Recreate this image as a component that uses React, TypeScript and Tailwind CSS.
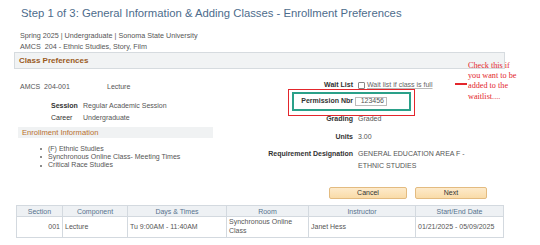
import React from "react";

const sans = { fontFamily: '"Liberation Sans", Arial, sans-serif' };

export default function App() {
  return (
    <div
      className="relative w-[540px] h-[245px] overflow-hidden bg-white text-[#444]"
      style={sans}
    >
      {/* Title */}
      <div className="pl-[21px] pt-[6px] text-[11.3px] leading-[14px] text-[#4d6c8c]">
        Step 1 of 3: General Information &amp; Adding Classes - Enrollment Preferences
      </div>
      <div className="pl-[20px] mt-[10px] text-[7.2px] leading-[11px] text-[#555]">
        Spring 2025 | Undergraduate | Sonoma State University
      </div>
      <div className="pl-[20px] text-[7.2px] leading-[11px] text-[#555]">
        AMCS&nbsp; 204 - Ethnic Studies, Story, Film
      </div>

      {/* Class Preferences bar */}
      <div className="ml-[14px] w-[491px] h-[17px] border border-[#d6dbdf] bg-[#f1f3f4] flex items-center pl-[4px]">
        <span className="text-[8px] font-bold text-[#9a5a1c]">Class Preferences</span>
      </div>

      {/* Body */}
      <div className="flex">
        {/* Left column */}
        <div className="w-[265px] pl-[18px]">
          <div className="mt-[13px] flex text-[7px] leading-[9px] text-[#555]">
            <span className="pl-[2px] w-[89px]">AMCS&nbsp; 204-001</span>
            <span>Lecture</span>
          </div>
          <div className="mt-[9px] flex text-[7px] leading-[12px]">
            <span className="pl-[33px] w-[65px] font-bold text-[#333]">Session</span>
            <span className="text-[#555]">Regular Academic Session</span>
          </div>
          <div className="flex text-[7px] leading-[12px]">
            <span className="pl-[33px] w-[65px] text-[#333]">Career</span>
            <span className="text-[#555]">Undergraduate</span>
          </div>
          <div className="mt-[3px] w-[195px] h-[11px] bg-[#f0f2f3] flex items-center pl-[4px]">
            <span className="text-[7.6px] text-[#b86f2e]">Enrollment Information</span>
          </div>
          <div className="mt-[7px] text-[7px] leading-[8.2px] text-[#555]">
            {["(F) Ethnic Studies", "Synchronous Online Class- Meeting Times", "Critical Race Studies"].map(
              (t) => (
                <div key={t} className="flex items-center">
                  <span className="ml-[22px] w-[8px] flex items-center">
                    <span className="w-[2px] h-[2px] rounded-full bg-[#666]" />
                  </span>
                  <span>{t}</span>
                </div>
              )
            )}
          </div>
        </div>

        {/* Right column */}
        <div className="flex-1">
          <div className="mt-[11px] flex items-center h-[10px] text-[7px]">
            <span className="w-[88px] text-right font-bold text-[#333]">Wait List</span>
            <span className="ml-[5px] w-[7px] h-[7px] border border-[#888] rounded-[1px] bg-white" />
            <span className="ml-[2px] text-[#666] underline decoration-[#bbb]">Wait list if class is full</span>
          </div>
          <div className="relative mt-[2px] h-[19px] flex items-center text-[7px]">
            <span className="w-[88px] text-right font-bold text-[#333]">Permission Nbr</span>
            <span className="ml-[2px] w-[32px] h-[9px] border border-[#bbb] bg-white flex items-center justify-end pr-[2px] text-[#555]">
              123456
            </span>
            <div className="absolute left-[27px] top-[0px] w-[119px] h-[19px] border-2 border-[#2aa089]" />
            <div className="absolute left-[23px] top-[-3px] w-[127px] h-[27px] border-[1.5px] border-[#e3262c]" />
          </div>
          <div className="mt-[4px] flex items-center h-[9px] text-[7px]">
            <span className="w-[88px] text-right font-bold text-[#333]">Grading</span>
            <span className="ml-[5px] text-[#555]">Graded</span>
          </div>
          <div className="mt-[9px] flex items-center h-[9px] text-[7px]">
            <span className="w-[88px] text-right font-bold text-[#333]">Units</span>
            <span className="ml-[5px] text-[#555]">3.00</span>
          </div>
          <div className="mt-[6px] flex text-[7px] leading-[12px]">
            <span className="w-[88px] text-right font-bold text-[#333] whitespace-nowrap">Requirement Designation</span>
            <span className="ml-[5px] w-[120px] text-[#555]">GENERAL EDUCATION AREA F - ETHNIC STUDIES</span>
          </div>
        </div>
      </div>

      {/* Buttons */}
      <div className="mt-[15px] flex justify-end pr-[53px] gap-[8px] text-[7px] text-[#333]">
        <button className="w-[78px] h-[12px] rounded-[2px] border border-[#e3bb80] bg-gradient-to-b from-[#fdeacb] to-[#f9dba8] flex items-center justify-center">
          Cancel
        </button>
        <button className="w-[72px] h-[12px] rounded-[2px] border border-[#e3bb80] bg-gradient-to-b from-[#fdeacb] to-[#f9dba8] flex items-center justify-center">
          Next
        </button>
      </div>

      {/* Table */}
      <div className="ml-[16px] mt-[6px] w-[487px]">
        <table className="w-[487px] border-collapse table-fixed text-[7px]">
          <colgroup>
            <col className="w-[46px]" />
            <col className="w-[65px]" />
            <col className="w-[99px]" />
            <col className="w-[82px]" />
            <col className="w-[107px]" />
            <col className="w-[88px]" />
          </colgroup>
          <thead>
            <tr className="h-[11px] bg-[#eef1f4] text-[#56718e]">
              {["Section", "Component", "Days & Times", "Room", "Instructor", "Start/End Date"].map((h) => (
                <th key={h} className="border border-[#d3d9df] font-normal text-center p-0 leading-[9px]">
                  {h}
                </th>
              ))}
            </tr>
          </thead>
          <tbody className="text-[#555]">
            <tr className="h-[21px]">
              <td className="border border-[#d3d9df] text-right pr-[2px] align-middle">001</td>
              <td className="border border-[#d3d9df] pl-[2px] align-middle">Lecture</td>
              <td className="border border-[#d3d9df] pl-[2px] align-middle">Tu 9:00AM - 11:40AM</td>
              <td className="border border-[#d3d9df] pl-[2px] align-middle leading-[8.7px]">
                Synchronous Online Class
              </td>
              <td className="border border-[#d3d9df] pl-[2px] align-middle">Janet Hess</td>
              <td className="border border-[#d3d9df] pl-[2px] align-middle">01/21/2025 - 05/09/2025</td>
            </tr>
          </tbody>
        </table>
      </div>

      {/* Annotation */}
      <div className="absolute left-[455px] top-[83px] w-[12px] h-[1.5px] bg-[#e3262c]" />
      <div
        className="absolute left-[468px] top-[61px] text-[8.2px] leading-[10.2px] text-[#e3262c]"
        style={{ fontFamily: '"Liberation Serif", "Times New Roman", serif' }}
      >
        Check this if
        <br />
        you want to be
        <br />
        added to the
        <br />
        waitlist....
      </div>
    </div>
  );
}
